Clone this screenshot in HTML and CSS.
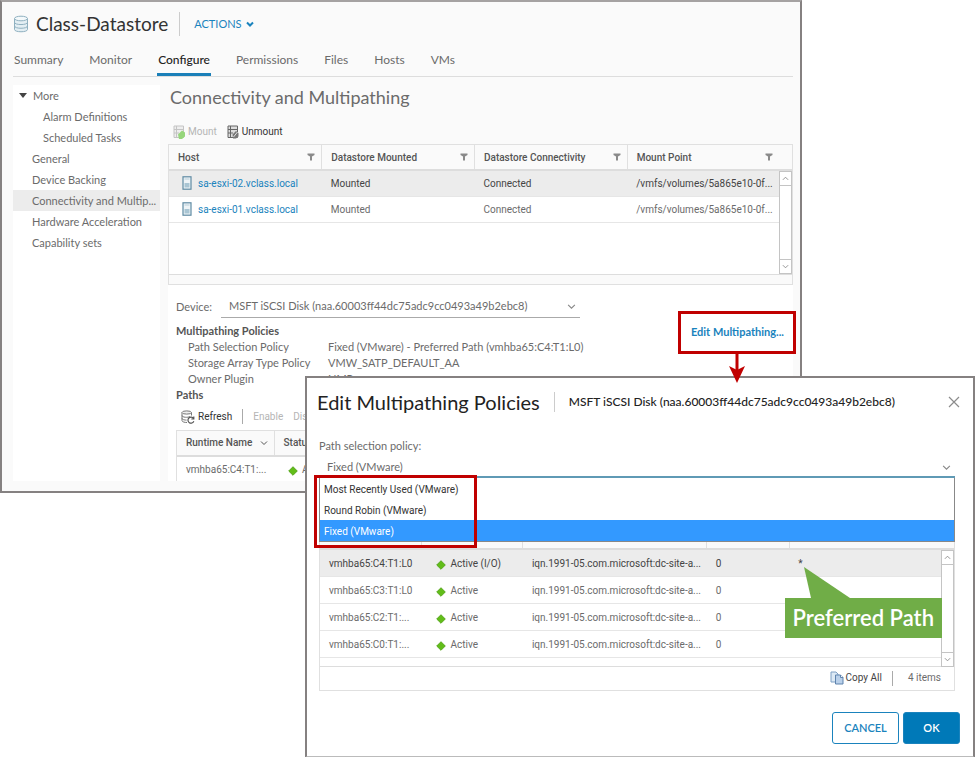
FILE: index.html
```
<!DOCTYPE html>
<html lang="en">
    <head>
        <meta charset="utf-8">
        <title>Class-Datastore</title>
        <link rel="stylesheet" href="styles.css">
    </head>

    <body>
        <!-- shared icons -->
        <svg width="0" height="0" class="defs">
            <symbol id="filter" viewBox="0 0 8 8"><path d="M0.5 0.5h7v1.5L5 3.500v4H3v-4L0.500 2z" fill="#8a8a8a"/></symbol>
            <symbol id="down" viewBox="0 0 8 8"><path d="M1 2.5l3 3 3-3" fill="none" stroke="currentColor"/></symbol>
            <symbol id="up" viewBox="0 0 8 8"><path d="M1 5.5l3-3 3 3" fill="none" stroke="currentColor"/></symbol>
            <symbol id="diamond" viewBox="0 0 10 10"><path d="M5 0.7L9.3 5 5 9.3 0.7 5z" fill="#62bd19" stroke="#489c0c" stroke-width="0.8"/></symbol>
            <symbol id="host" viewBox="0 0 10 14">
                <rect x="1" y="0.8" width="8" height="12.4" fill="#eef4f7" stroke="#5f8ba3" stroke-width="1.2"/>
                <rect x="2.5" y="7" width="5" height="4.5" fill="#a9c5d3"/>
                <path d="M2.5 3h5" stroke="#b8ced9"/>
            </symbol>
        </svg>

        <div class="window">
            <div class="heading">
                <svg class="datastore" viewBox="0 0 16 18">
                    <path d="M1.5 3.5v11c0 3 13 3 13 0v-11" fill="#e3eef3" stroke="#8fb0c0"/>
                    <ellipse cx="8" cy="3.5" rx="6.5" ry="2.3" fill="#f4f9fb" stroke="#8fb0c0"/>
                    <path d="M1.5 7.3c0 3 13 3 13 0M1.5 11c0 3 13 3 13 0" fill="none" stroke="#8fb0c0"/>
                </svg>
                <h1>Class-Datastore</h1>
                <button class="actions" type="button">ACTIONS <svg><use href="#down"/></svg></button>
            </div>

            <nav class="tabs">
                <a href="#">Summary</a>
                <a href="#">Monitor</a>
                <a href="#" class="active">Configure</a>
                <a href="#">Permissions</a>
                <a href="#">Files</a>
                <a href="#">Hosts</a>
                <a href="#">VMs</a>
            </nav>

            <div class="content">
                <ul class="sidebar">
                    <li class="group"><a href="#">More</a></li>
                    <li class="child"><a href="#">Alarm Definitions</a></li>
                    <li class="child"><a href="#">Scheduled Tasks</a></li>
                    <li><a href="#">General</a></li>
                    <li><a href="#">Device Backing</a></li>
                    <li class="selected"><a href="#">Connectivity and Multip...</a></li>
                    <li><a href="#">Hardware Acceleration</a></li>
                    <li><a href="#">Capability sets</a></li>
                </ul>

                <div class="main">
                    <h2>Connectivity and Multipathing</h2>
                    <div class="toolbar">
                        <button type="button" disabled>
                            <svg class="tool-icon" viewBox="0 0 12 14">
                                <path d="M1 1h9.500v11.500H1zM1 4.500h9.500M1 8h5M3.500 1v11" fill="#eee" stroke="#c4c4c4"/>
                                <path d="M5 9.500l4-4 3 2v4l-3 2.500H6z" fill="#97d67c"/>
                            </svg>
                            Mount
                        </button>
                        <button type="button">
                            <svg class="tool-icon" viewBox="0 0 12 14">
                                <path d="M1 1h9.500v11.500H1zM1 4.500h9.500M1 8h5M3.500 1v11" fill="#ddd" stroke="#666"/>
                                <path d="M5.500 9.500l3.500-3.500 2.500 2v3.500l-2.500 2H6z" fill="#777"/>
                                <path d="M6.500 12l4-5" stroke="#ddd"/>
                            </svg>
                            Unmount
                        </button>
                    </div>

                    <div class="grid hosts">
                        <table>
                            <thead>
                                <tr>
                                    <th>Host <svg class="filter"><use href="#filter"/></svg></th>
                                    <th>Datastore Mounted <svg class="filter"><use href="#filter"/></svg></th>
                                    <th>Datastore Connectivity <svg class="filter"><use href="#filter"/></svg></th>
                                    <th class="last">Mount Point <svg class="filter"><use href="#filter"/></svg></th>
                                </tr>
                            </thead>
                            <tbody>
                                <tr class="selected">
                                    <td><svg class="host-icon"><use href="#host"/></svg><a href="#">sa-esxi-02.vclass.local</a></td>
                                    <td>Mounted</td>
                                    <td>Connected</td>
                                    <td>/vmfs/volumes/5a865e10-0f...</td>
                                </tr>
                                <tr>
                                    <td><svg class="host-icon"><use href="#host"/></svg><a href="#">sa-esxi-01.vclass.local</a></td>
                                    <td>Mounted</td>
                                    <td>Connected</td>
                                    <td>/vmfs/volumes/5a865e10-0f...</td>
                                </tr>
                            </tbody>
                        </table>
                        <div class="grid-footer"></div>
                        <div class="scrollbar">
                            <svg><use href="#up"/></svg>
                            <svg><use href="#down"/></svg>
                        </div>
                    </div>

                    <div class="panel">
                        <div class="device">
                            <label for="device">Device:</label>
                            <div class="select">
                                <select id="device">
                                    <option>MSFT iSCSI Disk (naa.60003ff44dc75adc9cc0493a49b2ebc8)</option>
                                </select>
                                <svg><use href="#down"/></svg>
                            </div>
                        </div>

                        <h3>Multipathing Policies</h3>
                        <dl>
                            <dt>Path Selection Policy</dt>
                            <dd>Fixed (VMware) - Preferred Path (vmhba65:C4:T1:L0)</dd>
                            <dt>Storage Array Type Policy</dt>
                            <dd>VMW_SATP_DEFAULT_AA</dd>
                            <dt>Owner Plugin</dt>
                            <dd>NMP</dd>
                        </dl>
                        <h3>Paths</h3>

                        <div class="toolbar paths-toolbar">
                            <button type="button">
                                <svg class="refresh-icon" viewBox="0 0 14 14">
                                    <path d="M1 2.500v8c0 1.500 3 2 5 2M10.500 2.500v3M1 5.500c0 2 6 2.300 8 1M1 8.300c0 1.500 3 1.800 4.500 1.800" fill="none" stroke="#777"/>
                                    <ellipse cx="5.700" cy="2.500" rx="4.700" ry="1.600" fill="#eee" stroke="#777"/>
                                    <path d="M12.500 8.500a3 3 0 1 0 0.300 2.700M12.800 6.500v2.500h-2.500" fill="none" stroke="#555" stroke-width="1.200"/>
                                </svg>
                                Refresh
                            </button>
                            <span class="separator"></span>
                            <button type="button" disabled>Enable</button>
                            <button type="button" disabled>Disable</button>
                        </div>

                        <div class="grid paths">
                            <table>
                                <thead>
                                    <tr>
                                        <th>Runtime Name <svg class="sort"><use href="#down"/></svg></th>
                                        <th>Status</th>
                                    </tr>
                                </thead>
                                <tbody>
                                    <tr>
                                        <td>vmhba65:C4:T1:...</td>
                                        <td class="status"><svg><use href="#diamond"/></svg>Active (I/O)</td>
                                    </tr>
                                </tbody>
                            </table>
                        </div>

                        <div class="edit-callout">
                            <button type="button">Edit Multipathing...</button>
                            <svg class="arrow" viewBox="0 0 16 32">
                                <path d="M8 0v22" stroke="#c00000" stroke-width="3"/>
                                <path d="M0 15l8 4 8-4-8 17z" fill="#c00000"/>
                            </svg>
                        </div>
                    </div>
                </div>
            </div>
        </div>

        <div class="modal" role="dialog" aria-labelledby="modal-title">
            <div class="modal-header">
                <h1 id="modal-title">Edit Multipathing Policies</h1>
                <span class="subtitle">MSFT iSCSI Disk (naa.60003ff44dc75adc9cc0493a49b2ebc8)</span>
                <button class="close" type="button" aria-label="Close">
                    <svg viewBox="0 0 12 12"><path d="M1 1l10 10M11 1L1 11" stroke="#8c8c8c" stroke-width="1.200"/></svg>
                </button>
            </div>

            <div class="modal-body">
                <label for="policy">Path selection policy:</label>
                <div class="select policy">
                    <select id="policy">
                        <option>Fixed (VMware)</option>
                    </select>
                    <svg><use href="#down"/></svg>
                    <ul class="options" role="listbox">
                        <li role="option">Most Recently Used (VMware)</li>
                        <li role="option">Round Robin (VMware)</li>
                        <li role="option" class="selected" aria-selected="true">Fixed (VMware)</li>
                    </ul>
                    <div class="highlight"></div>
                </div>

                <div class="grid policies">
                    <table>
                        <thead>
                            <tr><th></th><th></th><th></th><th></th><th class="last"></th></tr>
                        </thead>
                        <tbody>
                            <tr class="selected">
                                <td>vmhba65:C4:T1:L0</td>
                                <td class="status"><svg><use href="#diamond"/></svg>Active (I/O)</td>
                                <td>iqn.1991-05.com.microsoft:dc-site-a...</td>
                                <td>0</td>
                                <td>*</td>
                            </tr>
                            <tr>
                                <td>vmhba65:C3:T1:L0</td>
                                <td class="status"><svg><use href="#diamond"/></svg>Active</td>
                                <td>iqn.1991-05.com.microsoft:dc-site-a...</td>
                                <td>0</td>
                                <td></td>
                            </tr>
                            <tr>
                                <td>vmhba65:C2:T1:...</td>
                                <td class="status"><svg><use href="#diamond"/></svg>Active</td>
                                <td>iqn.1991-05.com.microsoft:dc-site-a...</td>
                                <td>0</td>
                                <td></td>
                            </tr>
                            <tr>
                                <td>vmhba65:C0:T1:...</td>
                                <td class="status"><svg><use href="#diamond"/></svg>Active</td>
                                <td>iqn.1991-05.com.microsoft:dc-site-a...</td>
                                <td>0</td>
                                <td></td>
                            </tr>
                        </tbody>
                    </table>
                    <div class="grid-footer">
                        <button type="button">
                            <svg class="copy-icon" viewBox="0 0 14 14">
                                <path d="M1 1h5l2 2v8H1z" fill="#dce9f5" stroke="#7fa0c4"/>
                                <path d="M5.500 4h5l2.500 2.500V13H5.500z" fill="#b9d0ea" stroke="#5f83ad"/>
                                <path d="M10.500 4v2.500H13" fill="#fff" stroke="#5f83ad"/>
                            </svg>
                            Copy All
                        </button>
                        <span class="separator"></span>
                        <span class="count">4 items</span>
                    </div>
                    <div class="scrollbar">
                        <svg><use href="#up"/></svg>
                        <svg><use href="#down"/></svg>
                    </div>
                    <div class="preferred">
                        <svg viewBox="0 0 46 31"><path d="M0 0l7 31h39z" fill="#70ad47"/></svg>
                        Preferred Path
                    </div>
                </div>
            </div>

            <div class="modal-footer">
                <button class="btn" type="button">CANCEL</button>
                <button class="btn btn-primary" type="button">OK</button>
            </div>
        </div>
    </body>
</html>
```
FILE: styles.css
```
* {
    box-sizing: border-box;
}

body {
    margin: 0;
    background: white;
    color: #6b6b6b;
    font: 11px/16px Lato, "Liberation Sans", sans-serif;
}

h1, h2, h3, ul, dl, dd {
    margin: 0;
    padding: 0;
    font-weight: 400;
}

ul {
    list-style: none;
}

a {
    color: inherit;
    text-decoration: none;
}

button, select {
    margin: 0;
    padding: 0;
    border: 0;
    background: none;
    color: inherit;
    font: inherit;
}

.defs {
    position: absolute;
}

/* windows */

.window {
    position: absolute;
    top: 0;
    left: 0;
    width: 82.3%;
    padding: 10px 7px 10px 11px;
    border: 2px solid #858181;
    border-top-color: #a5a2a2;
    background: #fafafa;
}

.heading {
    display: flex;
    align-items: center;
    height: 24px;
}

.heading h1 {
    margin-left: 7px;
    color: #333;
    font-size: 19px;
    line-height: 24px;
}

.datastore {
    width: 16px;
    height: 18px;
}

.actions {
    display: flex;
    align-items: center;
    gap: 4px;
    height: 24px;
    margin-left: 11px;
    padding-left: 14px;
    border-left: 1px solid #ccc;
    color: #1a83bd;
}

.actions svg {
    width: 8px;
    height: 8px;
    stroke-width: 2;
}

.tabs {
    display: flex;
    gap: 24px;
    margin-top: 11px;
    border-bottom: 1px solid #ddd;
    font-size: 12px;
    line-height: 26px;
}

.tabs a {
    padding: 0 1px;
    border-bottom: 3px solid transparent;
}

.tabs .active {
    border-color: #1a7fb8;
    color: #222;
    font-weight: 500;
}

.content {
    display: grid;
    grid-template-columns: 147px 1fr;
    gap: 8px;
    padding-top: 8px;
}

.sidebar {
    background: white;
    line-height: 21px;
}

.sidebar li {
    padding-left: 19px;
    white-space: nowrap;
}

.sidebar .child {
    padding-left: 30px;
}

.sidebar .group {
    display: flex;
    align-items: center;
    gap: 6px;
    padding-left: 6px;
}

.sidebar .group::before {
    content: "";
    border: 4px solid transparent;
    border-top: 5px solid #444;
    border-bottom: 0;
}

.sidebar .selected {
    background: #ececec;
}

.main h2 {
    padding: 0 2px;
    font-size: 18px;
    line-height: 24px;
}

/* toolbars */

.toolbar {
    display: flex;
    align-items: center;
    gap: 10px;
    height: 20px;
    margin: 13px 0 2px;
    padding-left: 5px;
    font-family: Roboto, sans-serif;
    font-size: 10px;
}

.toolbar button {
    display: flex;
    align-items: center;
    gap: 3px;
    color: #333;
}

.toolbar button:disabled {
    color: #b5b5b5;
}

.tool-icon {
    width: 12px;
    height: 14px;
}

.refresh-icon, .copy-icon {
    width: 14px;
    height: 14px;
}

.separator {
    flex: none;
    width: 1px;
    height: 15px;
    background: #aaa;
}

.paths-toolbar {
    height: 22px;
    margin: 3px 0 2px;
}

/* grids */

.grid {
    position: relative;
    display: flex;
    flex-direction: column;
    border: 1px solid #e0e0e0;
    background: white;
    font-family: Roboto, sans-serif;
    font-size: 10px;
}

.grid table {
    width: 100%;
    border-collapse: collapse;
    table-layout: fixed;
}

.grid th {
    position: relative;
    height: 25px;
    padding: 1px 9px 0;
    border-right: 1px solid #e0e0e0;
    border-bottom: 2px solid #ddd;
    background: #fafafa;
    color: #555;
    font-weight: 500;
    text-align: left;
    white-space: nowrap;
}

.grid .last {
    border-right: 0;
}

.grid td {
    height: 26px;
    padding: 2px 9px 0;
    border-bottom: 1px solid #e6e6e6;
    white-space: nowrap;
}

.grid a {
    color: #1a83bd;
}

.grid .selected td {
    background: #ececec;
    color: #444;
}

.filter, .sort {
    position: absolute;
    top: 8px;
    right: 6px;
    width: 8px;
    height: 8px;
}

.last .filter {
    right: 19px;
}

.host-icon {
    width: 10px;
    height: 14px;
    margin: 0 6px 0 4px;
    vertical-align: -3px;
}

.grid .status svg {
    width: 10px;
    height: 10px;
    margin-right: 4px;
    vertical-align: -3px;
}

.grid-footer {
    border-top: 1px solid #ddd;
}

.scrollbar {
    position: absolute;
    top: 26px;
    right: 0;
    bottom: 10px;
    display: flex;
    flex-direction: column;
    justify-content: space-between;
    width: 13px;
    border: 1px solid #c4c4c4;
    background: white;
    color: #888;
}

.scrollbar svg {
    width: 11px;
    height: 14px;
    padding: 2px;
    border-bottom: 1px solid #c4c4c4;
}

.scrollbar svg + svg {
    border-top: 1px solid #c4c4c4;
    border-bottom: 0;
}

.hosts table {
    margin-bottom: 51px;
}

.hosts th {
    width: 24.5%;
}

.hosts .last {
    width: auto;
}

.hosts .grid-footer {
    height: 10px;
    background: #fafafa;
}

/* only the first columns stay visible beside the dialog */
.paths-toolbar, .paths {
    max-width: 135px;
    overflow: hidden;
}

.paths-toolbar button {
    flex: none;
}

.paths {
    border-right: 0;
    border-bottom: 0;
}

.paths th:first-child {
    width: 97px;
}

.paths td {
    height: 25px;
    border: 0;
}

.paths .status {
    padding-left: 14px;
}

/* device panel */

.panel {
    position: relative;
    padding: 11px 0 0 8px;
    background: white;
}

.device {
    display: flex;
    align-items: center;
    gap: 9px;
}

.select {
    position: relative;
    width: 359px;
}

.select select {
    width: 100%;
    height: 22px;
    padding-left: 8px;
    border-bottom: 1px solid #aaa;
    appearance: none;
}

.select > svg {
    position: absolute;
    top: 6px;
    right: 4px;
    width: 9px;
    height: 9px;
    color: #888;
    pointer-events: none;
}

.panel h3 {
    color: #555;
    font-size: 11px;
    font-weight: 700;
}

.device + h3 {
    margin-top: 5px;
}

.panel dl {
    display: grid;
    grid-template-columns: 140px 1fr;
    padding-left: 12px;
}

.edit-callout {
    position: absolute;
    top: 26px;
    right: -3px;
    z-index: 2;
    width: 118px;
    height: 43px;
    border: 3px solid #c00000;
    background: white;
}

.edit-callout button {
    width: 100%;
    height: 100%;
    color: #1a83bd;
    font-weight: 700;
    white-space: nowrap;
}

.arrow {
    position: absolute;
    top: 100%;
    left: 48px;
    width: 16px;
    height: 32px;
}

/* edit policies dialog */

.modal {
    position: absolute;
    top: 376px;
    left: 305px;
    right: 0;
    z-index: 1;
    padding: 12px 13px 12px 10px;
    border: 2px solid #858181;
    border-bottom-color: #bbb;
    background: white;
}

.modal-header {
    display: flex;
    align-items: center;
    height: 24px;
    color: #222;
}

.modal-header h1 {
    font-size: 20px;
    line-height: 24px;
}

.subtitle {
    margin-left: 14px;
    padding-left: 14px;
    border-left: 1px solid #ccc;
    font-size: 12px;
    font-weight: 500;
    line-height: 20px;
}

.close {
    display: flex;
    margin-left: auto;
}

.close svg {
    width: 12px;
    height: 12px;
}

.modal-body {
    padding: 24px 5px 0 2px;
}

.modal-body label {
    display: block;
}

.policy {
    width: 100%;
    margin-top: 3px;
}

.policy select {
    display: block;
    height: 21px;
    border-bottom: 2px solid #5f9ab5;
}

.options {
    position: absolute;
    top: 100%;
    left: 0;
    right: 0;
    z-index: 1;
    border: 1px solid #888;
    border-top: 0;
    background: white;
    color: #333;
    font-family: Roboto, sans-serif;
    font-size: 10px;
    line-height: 19px;
}

.options li {
    padding: 2px 4px 0;
}

.options .selected {
    background: #3399ff;
    color: white;
}

.highlight {
    position: absolute;
    top: 18px;
    left: -5px;
    z-index: 1;
    width: 163px;
    height: 73px;
    border: 3px solid #c00000;
    pointer-events: none;
}

.policies {
    margin-top: 45px;
}

.policies th {
    width: 16%;
}

.policies th:nth-child(3) {
    width: 29%;
}

.policies th:nth-child(4) {
    width: 13%;
}

.policies .last {
    width: auto;
}

.policies td {
    height: 27px;
}

.policies .status {
    padding-left: 15px;
}

.policies .grid-footer {
    display: flex;
    align-items: center;
    justify-content: flex-end;
    gap: 10px;
    height: 24px;
    margin-top: 8px;
    padding-right: 13px;
}

.grid-footer button {
    display: flex;
    align-items: center;
    gap: 2px;
    color: #444;
}

.count {
    padding-left: 5px;
}

.policies .scrollbar {
    bottom: 23px;
}

.preferred {
    position: absolute;
    top: 74px;
    right: 12px;
    padding: 0 8px;
    background: #70ad47;
    color: white;
    font: 600 22px/40px Lato, sans-serif;
}

.preferred svg {
    position: absolute;
    bottom: 100%;
    left: 19px;
    width: 46px;
    height: 31px;
}

.modal-footer {
    display: flex;
    justify-content: flex-end;
    gap: 4px;
    margin-top: 21px;
}

.btn {
    width: 67px;
    height: 32px;
    border: 1px solid #1a83bd;
    border-radius: 3px;
    color: #1a83bd;
    font-weight: 600;
}

.btn-primary {
    width: 57px;
    background: #0079b8;
    color: white;
}
```
